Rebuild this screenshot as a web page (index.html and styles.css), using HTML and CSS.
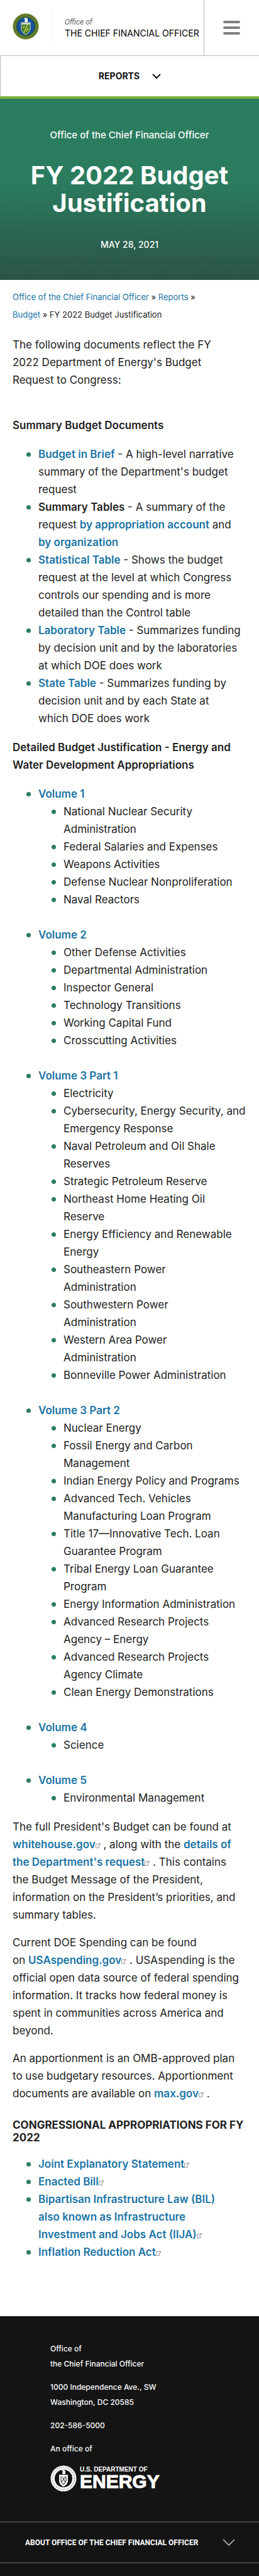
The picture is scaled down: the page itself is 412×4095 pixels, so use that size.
FILE: index.html
```html
<!DOCTYPE html>
<html lang="en">
<head>
<meta charset="utf-8">
<meta name="viewport" content="width=device-width, initial-scale=1">
<title>FY 2022 Budget Justification | Department of Energy</title>
<link rel="stylesheet" href="styles.css">
</head>
<body>
<svg class="defs" width="0" height="0" aria-hidden="true">
  <symbol id="ext" viewBox="0 0 8 8"><path d="M4.500 1.500H.5v6h5V4M4.500.5h3v3M7.500.5l-4 4" fill="none" stroke="currentColor"/></symbol>
</svg>
<header class="site-header">
  <a class="brand" href="#" aria-label="Office of the Chief Financial Officer">
    <svg class="seal" viewBox="0 0 42 42" aria-hidden="true">
      <circle cx="21" cy="21" r="20.500" fill="#4f6f2d"/>
      <circle cx="21" cy="21" r="20" fill="none" stroke="#8f9a2c" stroke-width="1"/>
      <circle cx="21" cy="21" r="17" fill="none" stroke="#9a9c3a" stroke-width="2" stroke-dasharray="1 2"/>
      <circle cx="21" cy="21" r="14.500" fill="#1553a0" stroke="#2a4a3a"/>
      <path d="M14 15h14v9c0 5-3 8-7 10-4-2-7-5-7-10z" fill="#3f7d33" stroke="#e8e3a0"/>
      <path d="M14 15h14v3H14z" fill="#c9d3c0"/>
      <path d="M24 18l-6 13M19 20l-2 4M25 24l-3 5" stroke="#d9d84a" stroke-width="1.500" fill="none"/>
      <path d="M18 8l3-1 3 2v5h-5l1-4z" fill="#fff"/>
    </svg>
    <span class="brand-text"><span class="brand-small">Office of</span><span class="brand-name">THE CHIEF FINANCIAL OFFICER</span></span>
  </a>
  <button class="menu" type="button" aria-label="Menu"><span></span><span></span><span></span></button>
</header>
<nav class="subnav" aria-label="Section">
  <button type="button">REPORTS
    <svg width="14" height="9" viewBox="0 0 14 9" aria-hidden="true"><path d="M1 1l6 6 6-6" fill="none" stroke="#111" stroke-width="2"/></svg>
  </button>
</nav>
<section class="hero">
  <p class="hero-office">Office of the Chief Financial Officer</p>
  <h1>FY 2022 Budget Justification</h1>
  <p class="hero-date">MAY 28, 2021</p>
</section>
<main>
  <nav class="crumbs" aria-label="Breadcrumb"><a href="#">Office of the Chief Financial Officer</a> » <a href="#">Reports</a> » <a href="#">Budget</a> » FY 2022 Budget Justification</nav>
  <p class="lead">The following documents reflect the FY 2022 Department of Energy's Budget Request to Congress:</p>
  <p class="label">Summary Budget Documents</p>
  <ul>
    <li><a href="#">Budget in Brief</a> - A high-level narrative summary of the Department's budget request</li>
    <li><strong>Summary Tables</strong> - A summary of the request <a href="#">by appropriation account</a> and <a href="#">by organization</a></li>
    <li><a href="#">Statistical Table</a> - Shows the budget request at the level at which Congress controls our spending and is more detailed than the Control table</li>
    <li><a href="#">Laboratory Table</a> - Summarizes funding by decision unit and by the laboratories at which DOE does work</li>
    <li><a href="#">State Table</a> - Summarizes funding by decision unit and by each State at which&nbsp;DOE does work</li>
  </ul>
  <p class="label">Detailed Budget Justification - Energy and Water Development Appropriations</p>
  <ul class="volumes">
    <li><a href="#">Volume 1</a>
      <ul><li>National Nuclear Security Administration</li><li>Federal Salaries and Expenses</li><li>Weapons Activities</li><li>Defense Nuclear Nonproliferation</li><li>Naval Reactors</li></ul></li>
    <li><a href="#">Volume 2</a>
      <ul><li>Other Defense Activities</li><li>Departmental Administration</li><li>Inspector General</li><li>Technology Transitions</li><li>Working Capital Fund</li><li>Crosscutting Activities</li></ul></li>
    <li><a href="#">Volume 3 Part 1</a>
      <ul><li>Electricity</li><li>Cybersecurity, Energy Security, and Emergency Response</li><li>Naval Petroleum and Oil Shale Reserves</li><li>Strategic Petroleum Reserve</li><li>Northeast Home Heating Oil<br>Reserve</li><li>Energy Efficiency and Renewable Energy</li><li>Southeastern Power<br>Administration</li><li>Southwestern Power<br>Administration</li><li>Western Area Power<br>Administration</li><li>Bonneville Power Administration</li></ul></li>
    <li><a href="#">Volume 3 Part 2</a>
      <ul><li>Nuclear Energy</li><li>Fossil Energy and Carbon Management</li><li>Indian Energy Policy and Programs</li><li>Advanced Tech. Vehicles Manufacturing Loan Program</li><li>Title 17—Innovative Tech. Loan Guarantee Program</li><li>Tribal Energy Loan Guarantee Program</li><li>Energy Information Administration</li><li>Advanced Research Projects<br>Agency – Energy</li><li>Advanced Research Projects<br>Agency Climate</li><li>Clean Energy Demonstrations</li></ul></li>
    <li><a href="#">Volume 4</a>
      <ul><li>Science</li></ul></li>
    <li><a href="#">Volume 5</a>
      <ul><li>Environmental Management</li></ul></li>
  </ul>
  <p>The full President's Budget can be found at <a href="#">whitehouse.gov<svg class="ext"><use href="#ext"/></svg></a> , along with the <a href="#">details of the&nbsp;Department's request<svg class="ext"><use href="#ext"/></svg></a> . This contains the&nbsp;Budget Message of the President, information on the President’s priorities, and summary tables.</p>
  <p>Current DOE Spending can be found on&nbsp;<a href="#">USAspending.gov<svg class="ext"><use href="#ext"/></svg></a> . USAspending is the official open data source of federal spending information. It tracks how federal money is spent in communities across America and beyond.</p>
  <p>An apportionment is an OMB-approved plan to&nbsp;use budgetary resources. Apportionment documents are available on <a href="#">max.gov<svg class="ext"><use href="#ext"/></svg></a> .</p>
  <h2>CONGRESSIONAL APPROPRIATIONS FOR FY 2022</h2>
  <ul>
    <li><a href="#">Joint Explanatory Statement<svg class="ext"><use href="#ext"/></svg></a></li>
    <li><a href="#">Enacted Bill<svg class="ext"><use href="#ext"/></svg></a></li>
    <li><a href="#">Bipartisan Infrastructure Law (BIL)<br>also known as Infrastructure<br>Investment and Jobs Act (IIJA)<svg class="ext"><use href="#ext"/></svg></a></li>
    <li><a href="#">Inflation Reduction Act<svg class="ext"><use href="#ext"/></svg></a></li>
  </ul>
</main>
<footer>
  <address class="contact">
    <p>Office of<br>the Chief Financial Officer</p>
    <p>1000 Independence Ave., SW<br>Washington, DC 20585</p>
    <p>202-586-5000</p>
    <p>An office of</p>
    <a class="doe" href="#">
      <svg viewBox="0 0 42 44" aria-hidden="true">
        <circle cx="21" cy="22" r="20.500" fill="#fff"/>
        <circle cx="21" cy="22" r="17.500" fill="none" stroke="#777" stroke-width="2" stroke-dasharray="1 2"/>
        <circle cx="21" cy="22" r="14" fill="#141414"/>
        <path d="M14 16h14v9c0 5-3 8-7 10-4-2-7-5-7-10z" fill="#fff"/>
        <path d="M17 19v7l4 6 4-6v-7M24 19l-6 9M19 19l5 9" stroke="#141414" fill="none"/>
        <path d="M18 9l3-1 3 2v5h-5l1-4z" fill="#fff"/>
      </svg>
      <span class="doe-text"><span class="doe-small">U.S. DEPARTMENT OF</span><span class="doe-big">ENERGY</span></span>
    </a>
  </address>
  <button class="about" type="button"><span>ABOUT OFFICE OF THE CHIEF FINANCIAL OFFICER</span>
    <svg width="20" height="12" viewBox="0 0 20 12" aria-hidden="true"><path d="M1 1l9 9 9-9" fill="none" stroke="#999" stroke-width="2"/></svg>
  </button>
  <div class="footer-end"></div>
</footer>
</body>
</html>
```
FILE: styles.css
```css
* { box-sizing: border-box; }
body { margin: 0; background: #fff; color: #212121; font: 17px/28px Inter, "Liberation Sans", sans-serif; }
p, h1, h2, ul { margin: 0; }
button { border: 0; background: none; padding: 0; font: inherit; color: inherit; cursor: pointer; }
.defs { display: block; }
.site-header { display: flex; height: 89px; border-bottom: 1px solid #bbb; }
.brand { flex: 1; display: flex; align-items: center; gap: 20px; padding: 0 0 5px 20px; text-decoration: none; white-space: nowrap; }
.seal { width: 42px; height: 42px; flex: none; }
.brand-text { display: flex; flex-direction: column; padding: 6px 0 0 20px; height: 46px; border-left: 1px solid #eee; }
.brand-small { color: #666; font: italic 12px/20px Roboto, sans-serif; }
.brand-name { color: #000; font: 14px/16px Inter, sans-serif; }
.menu { width: 88px; flex: none; border-left: 1px solid #bbb; display: flex; flex-direction: column; align-items: center; justify-content: center; gap: 5px; }
.menu span { width: 27px; height: 4px; border-radius: 2px; background: #808080; }
.subnav { height: 64px; border-left: 1px solid #bbb; display: flex; justify-content: center; }
.subnav button { display: flex; align-items: center; gap: 20px; color: #111; font-size: 14px; font-weight: 700; }
.hero { border-top: 4px solid #7ab13d; padding: 48px 32px 42px; text-align: center; color: #fff; background: linear-gradient(#2a7d5f 0%, #2b7c5f 45%, #2b5347 100%); display: flex; flex-direction: column; }
.hero-office { font-size: 15px; line-height: 20px; font-weight: 500; }
h1 { font-size: 40px; line-height: 44px; font-weight: 700; margin: 32px 0 30px; }
.hero-date { font-size: 14px; line-height: 28px; font-weight: 500; }
main { padding: 13px 20px 70px; }
.crumbs { font-size: 13px; margin-bottom: 20px; padding-right: 40px; }
main a { color: #1a74a5; text-decoration: none; }
main li a, main p a, strong { font-weight: 600; }
main p { margin-bottom: 16px; }
main .lead { margin-bottom: 44px; padding-right: 40px; }
main .label { font-weight: 600; margin-bottom: 18px; }
main ul { list-style: none; padding: 0 0 0 41px; margin-bottom: 18px; }
main li { position: relative; }
main li::before { content: ""; position: absolute; left: -19px; top: 11px; width: 7px; height: 7px; border-radius: 50%; background: #2a7d5f; }
main ul ul { margin: 0; padding-left: 40px; }
.volumes > li + li { margin-top: 28px; }
.ext { width: 8px; height: 8px; color: #999; vertical-align: 0; }
h2 { font-size: 17px; line-height: 20px; font-weight: 700; margin: 26px 0 18px; }
footer { background: #141414; color: #fff; }
.contact { font-style: normal; font-size: 12px; line-height: 24px; font-weight: 500; padding: 40px 24px 46px 80px; }
.contact p { margin-bottom: 13px; }
.doe { display: flex; align-items: center; gap: 5px; color: #fff; text-decoration: none; }
.doe svg { width: 42px; height: 44px; }
.doe-text { display: flex; flex-direction: column; }
.doe-small { font: 700 10px/10px "Liberation Sans", sans-serif; }
.doe-big { font: 700 30px/28px "Liberation Sans", sans-serif; -webkit-text-stroke: 1px #fff; }
.about { width: 100%; height: 67px; border-top: 2px solid #444; border-bottom: 2px solid #444; padding: 0 38px 0 40px; display: flex; justify-content: space-between; align-items: center; font: 700 12px/20px Roboto, sans-serif; }
.footer-end { height: 20px; }
```
